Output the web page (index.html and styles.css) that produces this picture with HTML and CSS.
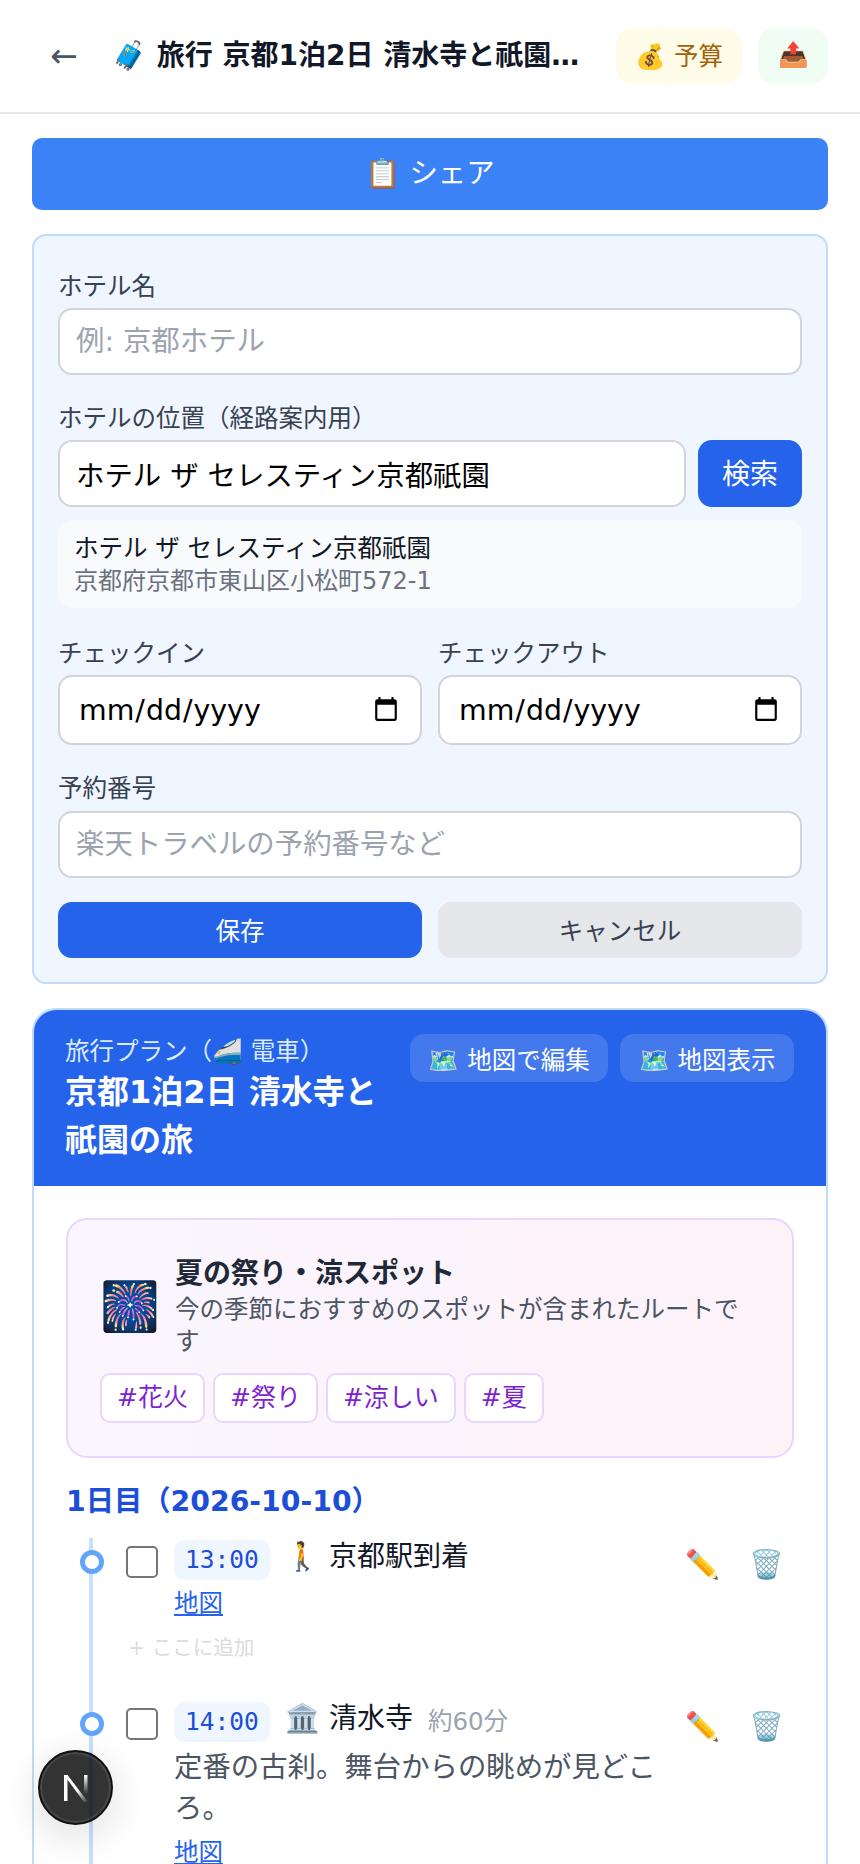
FILE: index.html
```html
<!DOCTYPE html>
<html lang="ja">
  <head>
    <meta charset="utf-8">
    <title>旅行プラン</title>
    <link rel="stylesheet" href="styles.css">
  </head>
  <body>
    <header class="topbar">
      <button class="back">←</button>
      <h1 class="topbar-title">🧳 旅行 京都1泊2日 清水寺と祇園の旅</h1>
      <button class="pill pill-budget">💰 予算</button>
      <button class="pill pill-export">📤</button>
    </header>

    <main class="page">
      <button class="share">📋 シェア</button>

      <form class="hotel">
        <label class="field-label">ホテル名</label>
        <input class="text-input" type="text" placeholder="例: 京都ホテル">

        <label class="field-label second">ホテルの位置（経路案内用）</label>
        <div class="search-row">
          <input class="text-input" type="text" value="ホテル ザ セレスティン京都祇園">
          <button class="search" type="button">検索</button>
        </div>
        <div class="place">
          <div class="place-name">ホテル ザ セレスティン京都祇園</div>
          <div class="place-addr">京都府京都市東山区小松町572-1</div>
        </div>

        <div class="two-col dates">
          <div>
            <label class="field-label">チェックイン</label>
            <input class="date-input" type="date">
          </div>
          <div>
            <label class="field-label">チェックアウト</label>
            <input class="date-input" type="date">
          </div>
        </div>

        <label class="field-label third">予約番号</label>
        <input class="text-input" type="text" placeholder="楽天トラベルの予約番号など">

        <div class="two-col actions">
          <button class="save" type="button">保存</button>
          <button class="cancel" type="button">キャンセル</button>
        </div>
      </form>

      <section class="plan">
        <div class="plan-head">
          <div class="plan-heading">
            <div class="plan-sub">旅行プラン（🚄 電車）</div>
            <h2 class="plan-title">京都1泊2日 清水寺と祇園の旅</h2>
          </div>
          <div class="plan-buttons">
            <button class="map-btn">🗺️ 地図で編集</button>
            <button class="map-btn">🗺️ 地図表示</button>
          </div>
        </div>

        <div class="plan-body">
          <div class="season">
            <div class="season-top">
              <div class="season-icon">🎆</div>
              <div>
                <div class="season-title">夏の祭り・涼スポット</div>
                <div class="season-desc">今の季節におすすめのスポットが含まれたルートです</div>
              </div>
            </div>
            <div class="tags">
              <span class="tag">#花火</span>
              <span class="tag">#祭り</span>
              <span class="tag">#涼しい</span>
              <span class="tag">#夏</span>
            </div>
          </div>

          <h3 class="day">1日目（2026-10-10）</h3>

          <div class="timeline">
            <div class="stop">
              <span class="dot"></span>
              <input class="check" type="checkbox">
              <div class="stop-main">
                <div class="stop-head">
                  <span class="time">13:00</span>
                  <span class="stop-name">🚶 京都駅到着</span>
                </div>
                <a class="map-link" href="#">地図</a>
              </div>
              <div class="stop-tools">
                <span>✏️</span>
                <span>🗑️</span>
              </div>
            </div>
            <div class="add-here">+ ここに追加</div>

            <div class="stop">
              <span class="dot"></span>
              <input class="check" type="checkbox">
              <div class="stop-main">
                <div class="stop-head">
                  <span class="time">14:00</span>
                  <span class="stop-name">🏛️ 清水寺</span>
                  <span class="stop-len">約60分</span>
                </div>
                <p class="stop-desc">定番の古刹。舞台からの眺めが見どころ。</p>
                <a class="map-link" href="#">地図</a>
              </div>
              <div class="stop-tools">
                <span>✏️</span>
                <span>🗑️</span>
              </div>
            </div>
          </div>
        </div>
      </section>
    </main>

    <button class="dev-badge" aria-label="Next.js">
      <svg width="26" height="28" viewBox="0 0 26 28">
        <defs>
          <linearGradient id="n-diag" x1="0" y1="0" x2="1" y2="1">
            <stop offset="0.55" stop-color="#fff"/>
            <stop offset="1" stop-color="#fff" stop-opacity="0"/>
          </linearGradient>
          <linearGradient id="n-stem" x1="0" y1="0" x2="0" y2="1">
            <stop offset="0" stop-color="#fff"/>
            <stop offset="1" stop-color="#fff" stop-opacity="0"/>
          </linearGradient>
        </defs>
        <rect x="1" y="0" width="3.5" height="26" fill="#fff"/>
        <polygon points="1,0 4.5,0 25,27 21,27" fill="url(#n-diag)"/>
        <rect x="21" y="0" width="3.5" height="19" fill="url(#n-stem)"/>
      </svg>
    </button>
  </body>
</html>
```

FILE: styles.css
```css
* {
  box-sizing: border-box;
}
html, body {
  height: 1864px;
  overflow: hidden;
}
body {
  margin: 0;
  background-color: #fff;
  color: #111827;
  font-family: "DejaVu Sans", "Noto Sans CJK JP", sans-serif;
}
button, input {
  font-family: inherit;
  border: 0;
}

.topbar {
  display: flex;
  align-items: center;
  height: 114px;
  padding: 0 32px 0 50px;
  border-bottom: 2px solid #e5e7eb;
}
.back {
  width: 34px;
  margin-bottom: 2px;
  padding: 0;
  background: none;
  color: #4b5563;
  font-size: 33px;
  text-align: left;
}
.topbar-title {
  flex: 1;
  min-width: 0;
  margin: 0 32px 6px 28px;
  overflow: hidden;
  font-size: 28px;
  font-weight: 700;
  white-space: nowrap;
  text-overflow: ellipsis;
}
.pill {
  height: 56px;
  padding: 0 0 3px;
  border-radius: 17px;
  font-size: 24.5px;
}
.pill-budget {
  width: 126px;
  margin-right: 16px;
  background-color: #fefce8;
  color: #a16207;
}
.pill-export {
  width: 70px;
  background-color: #f0fdf4;
  color: #15803d;
}

.page {
  padding: 24px 32px 0;
}
.share {
  display: block;
  width: 100%;
  height: 72px;
  padding: 0 0 7px;
  background-color: #3b82f6;
  border-radius: 10px;
  color: #fff;
  font-size: 28.4px;
}

.hotel {
  margin-top: 24px;
  padding: 33px 24px 24px;
  background-color: #eff6ff;
  border: 2px solid #bfdbfe;
  border-radius: 14px;
}
.field-label {
  display: block;
  margin-bottom: 4px;
  color: #374151;
  font-size: 24.5px;
  line-height: 35px;
}
.field-label.second {
  margin-top: 26px;
}
.field-label.third {
  margin-top: 26px;
  margin-bottom: 5px;
}
.text-input {
  display: block;
  width: 100%;
  height: 67px;
  padding: 0 16px;
  background-color: #fff;
  border: 2px solid #d1d5db;
  border-radius: 14px;
  color: #000;
  font-size: 28.4px;
}
.text-input::placeholder {
  color: #9ca3af;
}
.search-row {
  display: flex;
  gap: 12px;
}
.search-row .text-input {
  flex: 1;
}
.search {
  width: 104px;
  padding: 0 0 3px;
  background-color: #2563eb;
  border-radius: 14px;
  color: #fff;
  font-size: 28px;
}
.place {
  margin-top: 13px;
  padding: 13px 16px 11px;
  background-color: #f9fafb;
  border-radius: 14px;
  font-size: 24.5px;
  line-height: 32px;
}
.place-addr {
  color: #6b7280;
  font-size: 24px;
}
.two-col {
  display: grid;
  grid-template-columns: 1fr 1fr;
  gap: 16px;
}
.dates {
  margin-top: 28px;
}
.date-input {
  display: block;
  width: 100%;
  height: 70px;
  padding: 0 18px;
  background-color: #fff;
  border: 2px solid #d1d5db;
  border-radius: 14px;
  color: #000;
  font-size: 28.4px;
}
.actions {
  margin-top: 24px;
}
.save, .cancel {
  height: 56px;
  padding: 0 0 2px;
  border-radius: 14px;
  font-size: 24.5px;
}
.save {
  background-color: #2563eb;
  color: #fff;
}
.cancel {
  background-color: #e5e7eb;
  color: #374151;
}

.plan {
  margin-top: 24px;
  background-color: #fff;
  border: 2px solid #bfdbfe;
  border-radius: 24px;
  overflow: hidden;
}
.plan-head {
  display: flex;
  justify-content: space-between;
  align-items: flex-start;
  height: 176px;
  padding: 24px 32px 0 31px;
  background-color: #2563eb;
  color: #fff;
}
.plan-heading {
  width: 320px;
  padding-top: 2px;
}
.plan-sub {
  color: #dbeafe;
  font-size: 24.5px;
  line-height: 32px;
}
.plan-title {
  margin: 0;
  font-size: 32px;
  font-weight: 700;
  line-height: 48px;
}
.plan-buttons {
  display: flex;
  gap: 12px;
}
.map-btn {
  height: 48px;
  padding: 0 18.5px;
  background-color: rgba(255, 255, 255, .14);
  border-radius: 14px;
  color: #fff;
  font-size: 24.5px;
  white-space: nowrap;
}

.plan-body {
  padding: 32px 32px 32px;
}
.season {
  padding: 33px 32px 33px;
  background: linear-gradient(to right, #faf5ff, #fdf2f8);
  border: 2px solid #e9d5ff;
  border-radius: 21px;
}
.season-top {
  display: flex;
  align-items: center;
  gap: 15px;
}
.season-icon {
  font-size: 48px;
  line-height: 1;
}
.season-title {
  color: #1f2937;
  font-size: 28px;
  font-weight: 700;
  line-height: 41px;
}
.season-desc {
  color: #4b5563;
  font-size: 24.5px;
  line-height: 32px;
}
.tags {
  display: flex;
  gap: 8px;
  margin-top: 15px;
}
.tag {
  padding: 0 15px;
  background-color: #fff;
  border: 2px solid #e9d5ff;
  border-radius: 10px;
  color: #7e22ce;
  font-size: 25px;
  line-height: 46px;
}

.day {
  margin: 24px 0 0;
  color: #1d4ed8;
  font-size: 28.3px;
  font-weight: 700;
  line-height: 40px;
}
.timeline {
  position: relative;
  margin-top: 18px;
  padding-left: 60px;
}
.timeline::before {
  content: "";
  position: absolute;
  top: -2px;
  bottom: 0;
  left: 23px;
  width: 4px;
  background-color: #c9dffe;
}
.stop {
  position: relative;
  display: flex;
  align-items: flex-start;
}
.dot {
  position: absolute;
  top: 10px;
  left: -46px;
  width: 24px;
  height: 24px;
  background-color: #fff;
  border: 5px solid #60a5fa;
  border-radius: 50%;
}
.check {
  flex: none;
  width: 32px;
  height: 32px;
  margin: 6px 16px 0 0;
  appearance: none;
  background-color: #fff;
  border: 2px solid #767676;
  border-radius: 5px;
}
.stop-main {
  flex: 1;
  min-width: 0;
}
.stop-head {
  display: flex;
  align-items: flex-start;
  gap: 15px;
}
.time {
  flex: none;
  width: 96px;
  height: 40px;
  background-color: #eff6ff;
  border-radius: 10px;
  color: #1d4ed8;
  font-family: "DejaVu Sans Mono", monospace;
  font-size: 24.5px;
  line-height: 40px;
  text-align: center;
}
.stop-name {
  font-size: 28px;
  line-height: 34px;
  white-space: nowrap;
}
.stop-len {
  color: #9ca3af;
  font-size: 24.5px;
  line-height: 40px;
}
.stop-desc {
  margin: 5px 0 0;
  color: #4b5563;
  font-size: 28.4px;
  line-height: 41px;
}
.map-link {
  display: block;
  width: fit-content;
  margin-top: 6px;
  color: #2563eb;
  font-size: 24.5px;
  line-height: 36px;
}
.stop-tools {
  flex: none;
  display: flex;
  gap: 29px;
  width: 136px;
  padding: 7px 0 0 27px;
  font-size: 28px;
  line-height: 36px;
}
.add-here {
  margin: 12px 0 40px;
  padding-left: 2px;
  color: #d9dce1;
  font-size: 20.5px;
  line-height: 28px;
}

.dev-badge {
  position: fixed;
  left: 38px;
  top: 1750px;
  display: flex;
  align-items: center;
  justify-content: center;
  width: 75px;
  height: 75px;
  padding: 3px 0 0;
  background-color: rgba(0, 0, 0, .8);
  border: 2px solid #111;
  border-radius: 50%;
  box-shadow: inset 0 0 0 2px rgba(255, 255, 255, .1), 0 10px 40px rgba(0, 0, 0, .14);
}
```
